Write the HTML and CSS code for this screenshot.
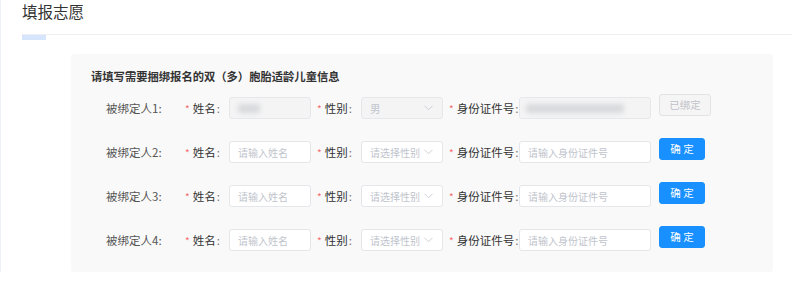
FILE: index.html
```html
<!DOCTYPE html>
<html lang="zh-CN">
<head>
<meta charset="utf-8">
<link rel="stylesheet" href="styles.css">
</head>
<body>
<div class="page">
  <div class="title">填报志愿</div>
  <div class="tabs"><div class="tab-ink"></div></div>
  <div class="panel">
    <div class="heading">请填写需要捆绑报名的双（多）胞胎适龄儿童信息</div>
    <div class="rows">
      <div class="row">
        <div class="who">被绑定人1:</div>
        <div class="lbl w-name"><span class="req">*</span>姓名<span class="colon">:</span></div>
        <div class="input name disabled"><span class="blur blur-name"></span></div>
        <div class="lbl w-sex"><span class="req">*</span>性别<span class="colon">:</span></div>
        <div class="input select disabled"><span class="val">男</span><svg class="chev" width="9" height="6" viewBox="0 0 9 6"><path d="M0.5 0.8 L4.5 4.8 L8.5 0.8" fill="none" stroke="#c8cbd2" stroke-width="0.9"/></svg></div>
        <div class="lbl w-id"><span class="req">*</span>身份证件号<span class="colon">:</span></div>
        <div class="input idno disabled"><span class="blur blur-id"></span></div>
        <div class="btn btn-done">已绑定</div>
      </div>
      <div class="row">
        <div class="who">被绑定人2:</div>
        <div class="lbl w-name"><span class="req">*</span>姓名<span class="colon">:</span></div>
        <div class="input name"><span class="ph">请输入姓名</span></div>
        <div class="lbl w-sex"><span class="req">*</span>性别<span class="colon">:</span></div>
        <div class="input select"><span class="ph">请选择性别</span><svg class="chev" width="9" height="6" viewBox="0 0 9 6"><path d="M0.5 0.8 L4.5 4.8 L8.5 0.8" fill="none" stroke="#c8cbd2" stroke-width="0.9"/></svg></div>
        <div class="lbl w-id"><span class="req">*</span>身份证件号<span class="colon">:</span></div>
        <div class="input idno"><span class="ph">请输入身份证件号</span></div>
        <div class="btn btn-ok">确 定</div>
      </div>
      <div class="row">
        <div class="who">被绑定人3:</div>
        <div class="lbl w-name"><span class="req">*</span>姓名<span class="colon">:</span></div>
        <div class="input name"><span class="ph">请输入姓名</span></div>
        <div class="lbl w-sex"><span class="req">*</span>性别<span class="colon">:</span></div>
        <div class="input select"><span class="ph">请选择性别</span><svg class="chev" width="9" height="6" viewBox="0 0 9 6"><path d="M0.5 0.8 L4.5 4.8 L8.5 0.8" fill="none" stroke="#c8cbd2" stroke-width="0.9"/></svg></div>
        <div class="lbl w-id"><span class="req">*</span>身份证件号<span class="colon">:</span></div>
        <div class="input idno"><span class="ph">请输入身份证件号</span></div>
        <div class="btn btn-ok">确 定</div>
      </div>
      <div class="row">
        <div class="who">被绑定人4:</div>
        <div class="lbl w-name"><span class="req">*</span>姓名<span class="colon">:</span></div>
        <div class="input name"><span class="ph">请输入姓名</span></div>
        <div class="lbl w-sex"><span class="req">*</span>性别<span class="colon">:</span></div>
        <div class="input select"><span class="ph">请选择性别</span><svg class="chev" width="9" height="6" viewBox="0 0 9 6"><path d="M0.5 0.8 L4.5 4.8 L8.5 0.8" fill="none" stroke="#c8cbd2" stroke-width="0.9"/></svg></div>
        <div class="lbl w-id"><span class="req">*</span>身份证件号<span class="colon">:</span></div>
        <div class="input idno"><span class="ph">请输入身份证件号</span></div>
        <div class="btn btn-ok">确 定</div>
      </div>
    </div>
  </div>
</div>
</body>
</html>
```

FILE: styles.css
```css
html, body {
  margin: 0;
  padding: 0;
  background: #ffffff;
}
body {
  font-family: "Noto Sans CJK SC", "Noto Sans", sans-serif;
  color: #333;
}
.page {
  height: 272px;
  border-left: 1px solid #eef2f8;
  box-sizing: border-box;
}
.title {
  height: 34px;
  padding-left: 21px;
  font-size: 15.5px;
  line-height: 22px;
  color: #333;
}
.tabs {
  margin-left: 21px;
  border-top: 1px solid #eeeeee;
  height: 5px;
}
.tab-ink {
  width: 24px;
  height: 5px;
  background: #d6e5fc;
}
.panel {
  margin: 14px 0 0 70px;
  width: 702px;
  box-sizing: border-box;
  background: #f9f9f9;
  border-radius: 3px;
  padding: 14px 20px 21px 20px;
}
.heading {
  font-size: 11.3px;
  font-weight: bold;
  line-height: 16px;
  color: #333;
}
.rows {
  margin-top: 13px;
  padding-left: 15px;
  display: flex;
  flex-direction: column;
  gap: 22px;
}
.row {
  display: flex;
  align-items: flex-start;
  height: 22px;
}
.who {
  width: 79px;
  font-size: 11.5px;
  line-height: 22px;
  color: #555;
}
.lbl {
  font-size: 11.5px;
  line-height: 22px;
  color: #333;
  white-space: nowrap;
}
.w-name { width: 44px; }
.w-sex { width: 44px; margin-left: 6px; }
.w-id { width: 70px; margin-left: 6px; }
.req {
  color: #f56c6c;
  font-size: 10px;
  margin-right: 3px;
  position: relative;
}
.colon {
  color: #777;
  margin-left: 1px;
}
.input {
  height: 22px;
  box-sizing: border-box;
  border: 1px solid #e4e6ea;
  border-radius: 3px;
  background: #fff;
  display: flex;
  align-items: center;
  padding-left: 8px;
  font-size: 10px;
}
.input.disabled {
  background: #f4f4f5;
  border-color: #e6e7ea;
}
.name { width: 82px; }
.select { width: 82px; padding-right: 9px; justify-content: space-between; }
.idno { width: 132px; }
.ph { color: #c0c4cc; }
.val { color: #c0c4cc; font-size: 10.5px; }
.chev { flex: none; }
.blur {
  display: block;
  height: 9px;
  background: #d8d9dc;
  filter: blur(2.5px);
  border-radius: 3px;
}
.blur-name { width: 22px; margin-left: 0; }
.blur-id { width: 98px; margin-left: -2px; }
.btn {
  height: 22px;
  margin-top: -3px;
  margin-left: 8px;
  box-sizing: border-box;
  border-radius: 3px;
  font-size: 10.5px;
  line-height: 20px;
  text-align: center;
}
.btn-ok {
  width: 46px;
  background: #1890ff;
  border: 1px solid #1890ff;
  color: #fff;
}
.btn-done {
  width: 52px;
  background: #f5f5f5;
  border: 1px solid #e2e3e6;
  color: #bfc2c8;
}
```
